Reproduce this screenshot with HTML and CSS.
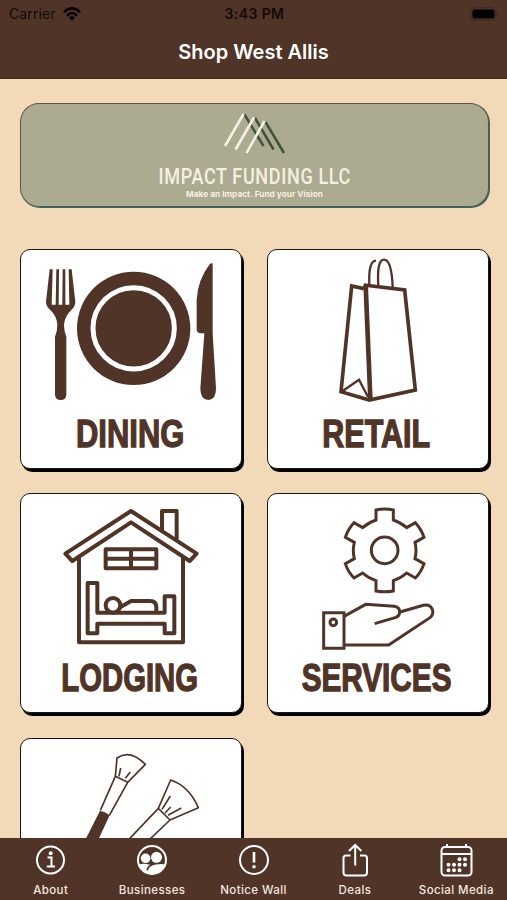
FILE: index.html
```html
<!DOCTYPE html>
<html lang="en">
<head>
  <meta charset="UTF-8" />
  <meta name="viewport" content="width=device-width, initial-scale=1.0"/>
  <title>Shop West Allis</title>
  <link rel="stylesheet" href="styles.css">
</head>
<body>

  <header>
    <div class="status-bar">
      <div class="carrier">
        <span>Carrier</span>
        <svg width="18" height="14" viewBox="0 0 18 14">
          <g fill="none" stroke="#000" stroke-width="2.6">
            <path d="M1 5.1Q9-2.2 17 5.1"/>
            <path d="M4 8.4Q9 4 14 8.4"/>
          </g>
          <path d="M5.9 10.5Q9 7.9 12.1 10.5L9 13.8Z"/>
        </svg>
      </div>
      <span class="time">3:43 PM</span>
      <svg class="battery" width="30" height="14" viewBox="0 0 30 14">
        <rect x=".8" y=".8" width="25" height="12.4" rx="4" fill="none" stroke="#3a2821"/>
        <rect x="2.4" y="2.4" width="22" height="9.2" rx="2.6"/>
        <path d="M27.3 4.8q2.6 2.2 0 4.4Z" fill="#3a2821"/>
      </svg>
    </div>
    <h1>Shop West Allis</h1>
  </header>

  <main>
    <a class="banner">
      <svg width="467" height="102" viewBox="21 104 467 102">
        <g fill="none" stroke-width="2.5">
          <path stroke="#40543a" d="M244.500 114.500L263.500 146M255 118L273.500 149.500M265.500 122L284 153"/>
          <path stroke="#f6f3e5" d="M243.500 114L225 146M254 117.500L235.500 149.500M264.500 121L246.500 153"/>
        </g>
        <text class="banner-title" transform="translate(158.500 184) scale(.82 1)" textLength="234">IMPACT FUNDING LLC</text>
        <text class="banner-sub" x="186" y="196.500" textLength="137" lengthAdjust="spacingAndGlyphs">Make an Impact. Fund your Vision</text>
      </svg>
    </a>

    <div class="grid">
      <a class="card">
        <svg viewBox="18 15 660 654">
          <g class="solid">
            <path d="M104 73H113L110 179H122L124 73H132L131 179H142L143 73H151L151 179H163L161 73H170L181 170Q181 184 169 195Q149 214 147 240Q147 258 154 276V449Q153 465 137 465Q121 465 120 449V276Q127 258 127 240Q126 214 106 195Q93 184 93 170Z"/>
            <circle cx="356" cy="250" r="170"/>
            <path d="M593 55V265L603 430Q603 465 580 465Q556 465 556 430L568 265H558Q545 265 545 252V165Q548 105 584 58Q588 53 593 55Z"/>
          </g>
          <circle cx="356" cy="250" r="122" fill="none" stroke="#fff" stroke-width="15"/>
          <text transform="translate(183 606) scale(.787 1)">DINING</text>
        </svg>
      </a>

      <a class="card">
        <svg viewBox="24 15 660 654">
          <g class="line">
            <path stroke-width="11" d="M312 131L275 123L243 440L328 465L466 435L434 135L311 120"/>
            <path stroke-width="14" d="M317 120L331 462"/>
            <path stroke-width="7" d="M248 438L297 404L324 456M328 118Q325 47 348 47M355 122Q350 44 372 44Q395 44 398 127"/>
          </g>
          <text transform="translate(187 606) scale(.775 1)">RETAIL</text>
        </svg>
      </a>

      <a class="card">
        <svg viewBox="18 12 660 654">
          <g class="line" stroke-width="12" stroke-linejoin="round">
            <path d="M348 63L151 191L172 213L348 97L524 213L545 191Z"/>
            <path d="M441 120V63H485V149M192 203V457H504V203"/>
            <path d="M272 178H424V235H272ZM348 178V235M272 206H424"/>
            <path d="M218 279H247V368H449V319H478V430H449V401H247V430H218Z"/>
            <circle cx="294" cy="346" r="22"/>
            <path d="M313 353L348 333H405Q424 333 424 352V366"/>
          </g>
          <text transform="translate(139 604) scale(.745 1)">LODGING</text>
        </svg>
      </a>

      <a class="card">
        <svg viewBox="24 12 660 654">
          <g class="line" stroke-width="9">
            <path d="M348 60Q374 54 400 60V90Q422 97 440 113L466 98Q484 117 492 142L465 157Q471 181 465 206L492 221Q484 246 466 264L440 249Q422 265 400 272V303Q374 308 348 303V272Q326 265 308 249L282 264Q264 246 256 221L283 206Q277 181 283 157L256 142Q264 117 282 98L308 113Q326 97 348 90Z"/>
            <circle cx="374" cy="181" r="40"/>
            <path d="M191 368H252V475H191Z"/>
            <circle cx="220" cy="397" r="10"/>
            <path d="M252 379L317 343L402 349Q419 351 419 366Q419 378 408 382L344 401M420 366L490 346Q510 342 517 358Q522 373 510 383L386 465H252"/>
          </g>
          <text transform="translate(125 604) scale(.756 1)">SERVICES</text>
        </svg>
      </a>

      <a class="card">
        <svg viewBox="18 26 660 654">
          <g class="line" stroke-width="5" stroke-linejoin="round">
            <path d="M306 83Q345 56 391 102L338 156L301 138ZM301 138L256 240M338 156L283 255M312 138L317 113M331 144L346 125"/>
            <path d="M467 149Q522 167 550 232L465 269L430 234ZM430 234L320 350M465 269L380 350M441 237L466 197M450 248L467 230M459 255L499 233"/>
          </g>
          <path class="solid" d="M255 241Q270 243 284 255L235 360H195Z"/>
        </svg>
      </a>
    </div>
  </main>

  <nav>
    <a class="tab">
      <svg width="34" height="34" viewBox="0 0 34 34">
        <circle cx="16.500" cy="17" r="13.500"/>
        <path d="M13.500 14.500H17.500V23.500M12.800 23.500H21"/>
        <circle class="fill" cx="16.700" cy="10.300" r="2"/>
      </svg>
      <span>About</span>
    </a>
    <a class="tab">
      <svg width="34" height="34" viewBox="0 0 34 34">
        <circle cx="17" cy="17" r="14"/>
        <circle class="fill" cx="10.600" cy="15.300" r="4.800"/>
        <circle class="fill" cx="21.500" cy="14.300" r="5.500"/>
        <path class="fill" d="M3.500 21.500Q8.500 19.800 15 21.800Q11.500 24 11.500 27.500H13Q14 22.500 21 21.500Q27 20.600 30.500 21.500Q26 31.500 17 31.500Q7.500 31 3.500 21.500Z"/>
      </svg>
      <span>Businesses</span>
    </a>
    <a class="tab">
      <svg width="34" height="34" viewBox="0 0 34 34">
        <circle cx="17" cy="17" r="14"/>
        <path stroke-width="2.600" d="M17 9V19.500"/>
        <circle class="fill" cx="17" cy="23.700" r="1.800"/>
      </svg>
      <span>Notice Wall</span>
    </a>
    <a class="tab">
      <svg width="34" height="34" viewBox="0 0 34 34">
        <path d="M12.500 12.500H8Q5.500 12.500 5.500 15V29.500Q5.500 32.500 8.500 32.500H26Q29 32.500 29 29.500V15Q29 12.500 26.500 12.500H22M17.200 22.500V2.500M11 8L17.200 2L23.400 8"/>
      </svg>
      <span>Deals</span>
    </a>
    <a class="tab">
      <svg width="34" height="34" viewBox="0 0 34 34">
        <rect x="2.500" y="4" width="30" height="28.500" rx="3.500"/>
        <path d="M2.500 11H32.500M8 1V4M27 1V4"/>
        <path class="dots" d="M20.500 16.200h0M26 16.200h0M9.500 21.800h0M15 21.800h0M20.500 21.800h0M26 21.800h0M9.500 27.300h0M15 27.300h0M20.500 27.300h0"/>
      </svg>
      <span>Social Media</span>
    </a>
  </nav>

</body>
</html>
```

FILE: styles.css
```css
* {
  box-sizing: border-box;
}

body {
  font-family: Inter, "Liberation Sans", sans-serif;
  margin: 0;
  height: 900px;
  display: flex;
  flex-direction: column;
  overflow: hidden;
  background-color: #f2d9b8;
}

header {
  flex: none;
  height: 79px;
  background-color: #503428;
  border-bottom: 1px solid #432a20;
}

.status-bar {
  display: grid;
  grid-template-columns: 1fr auto 1fr;
  align-items: center;
  height: 27px;
  padding: 0 7px 0 9px;
  font-size: 14px;
  color: #120b08;
}

.carrier {
  display: flex;
  align-items: center;
  gap: 7px;
}

.carrier span {
  letter-spacing: 0.1px;
}

.time {
  font-weight: 600;
  letter-spacing: 0.4px;
}

.battery {
  justify-self: end;
}

h1 {
  margin: 0;
  height: 50px;
  line-height: 51px;
  text-align: center;
  font-size: 20px;
  font-weight: 600;
  color: #fff;
}

main {
  flex: 1;
  min-height: 0;
  overflow: hidden;
  padding: 24px 17px 0 20px;
}

.banner {
  display: block;
  width: 469px;
  height: 104px;
  background-color: #acaa90;
  border: 1px solid #5d5444;
  border-bottom-color: #42645e;
  border-radius: 19px;
  box-shadow: 1px 1px 0 #42645e;
}

.banner svg,
.card svg {
  display: block;
}

.banner-title {
  font-family: Roboto, sans-serif;
  font-size: 22px;
  font-weight: 500;
  fill: #f4f0e1;
}

.banner-sub {
  font-family: Inter, sans-serif;
  font-size: 8px;
  font-weight: 700;
  fill: #f4f0e1;
}

.grid {
  display: grid;
  grid-template-columns: 222px 222px;
  column-gap: 25px;
  row-gap: 24.4px;
  margin-top: 42px;
}

.card {
  height: 220px;
  background-color: #fff;
  border: 1px solid #1c1713;
  border-radius: 10px;
  box-shadow: 2px 3px 0 #000;
  overflow: hidden;
}

.card svg {
  width: 220px;
  height: 218px;
}

.card text {
  font-family: "Liberation Sans", Arial, sans-serif;
  font-size: 118px;
  font-weight: bold;
  fill: #503428;
  stroke: #503428;
  stroke-width: 4px;
}

.solid {
  fill: #503428;
}

.line {
  fill: none;
  stroke: #503428;
}

nav {
  flex: none;
  height: 62px;
  display: flex;
  background-color: #503428;
}

.tab {
  flex: 1;
  display: flex;
  flex-direction: column;
  align-items: center;
  padding-top: 5px;
  font-size: 11.5px;
  font-weight: 500;
  letter-spacing: 0.4px;
  line-height: 14px;
  white-space: nowrap;
  color: #f3e9df;
}

.tab svg {
  flex: none;
  margin-bottom: 6px;
  fill: none;
  stroke: #fff;
  stroke-width: 2;
}

.tab .fill {
  fill: #fff;
  stroke: none;
}

.tab .dots {
  stroke-width: 4;
  stroke-linecap: round;
}
```
